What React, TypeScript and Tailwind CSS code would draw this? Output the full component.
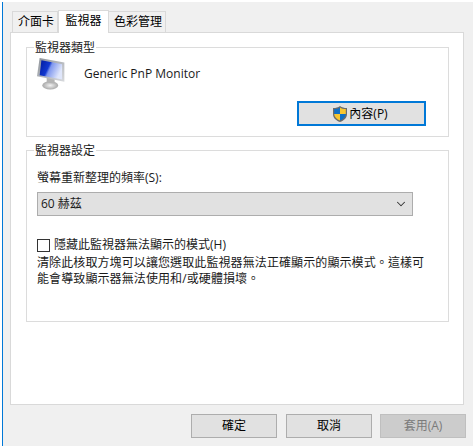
import { ChevronDown } from 'lucide-react'

const font = "font-['Open_Sans','Noto_Sans_CJK_TC',sans-serif]"

function MonitorIcon() {
  return (
    <svg width="30" height="33" viewBox="0 0 34 36" preserveAspectRatio="none" className="shrink-0">
      <defs>
        <linearGradient id="scr" x1="0" y1="0" x2="1" y2="0.4">
          <stop offset="0" stopColor="#001a9c" />
          <stop offset="0.45" stopColor="#1238d0" />
          <stop offset="0.55" stopColor="#7f97ee" />
          <stop offset="1" stopColor="#dfe6fb" />
        </linearGradient>
        <linearGradient id="bez" x1="0" y1="0" x2="1" y2="1">
          <stop offset="0" stopColor="#8d9299" />
          <stop offset="1" stopColor="#d8dadd" />
        </linearGradient>
        <radialGradient id="stand">
          <stop offset="0" stopColor="#f2f2f2" />
          <stop offset="1" stopColor="#a9a9a9" />
        </radialGradient>
      </defs>
      <ellipse cx="15" cy="31" rx="9" ry="4.5" fill="url(#stand)" />
      <path d="M11 22l9 2v5l-9-1z" fill="#b4b4b4" />
      <path d="M3 1l28 5v21L0 21z" fill="url(#bez)" />
      <path d="M5 3.500l23.500 4.500v16.500L3 20z" fill="url(#scr)" />
    </svg>
  )
}

function ShieldIcon() {
  return (
    <svg width="14" height="16" viewBox="0 0 14 16" className="shrink-0">
      <path d="M7 0c2 1.500 4 2 7 2v6c0 4-3 6.500-7 8-4-1.500-7-4-7-8V2c3 0 5-.5 7-2z" fill="#6b6b6b" />
      <path d="M7 1.500V8H1.200V3C3.500 3 5.500 2.500 7 1.500z" fill="#0f6fc6" />
      <path d="M7 1.500c1.500 1 3.500 1.500 5.800 1.500v5H7z" fill="#f8c630" />
      <path d="M1.200 8H7v6.500C3.800 13.200 1.500 11.200 1.200 8z" fill="#f8c630" />
      <path d="M7 8h5.800c-.3 3.200-2.600 5.200-5.800 6.500z" fill="#0f6fc6" />
    </svg>
  )
}

function Legend({ children }: { children: string }) {
  return (
    <span className="absolute left-[7px] top-[-8px] bg-white px-px leading-[16px] text-[#1a1a1a]">
      {children}
    </span>
  )
}

function FooterButton({ children, disabled = false }: { children: string; disabled?: boolean }) {
  return (
    <button
      className={
        disabled
          ? 'ml-[-1px] h-[24px] w-[86px] border border-[#bfbfbf] bg-[#cccccc] text-[#7a7a7a]'
          : 'h-[24px] w-[86px] border border-[#adadad] bg-[#e1e1e1] text-black'
      }
    >
      {children}
    </button>
  )
}

export default function App() {
  return (
    <div className={`${font} h-[446px] w-[473px] overflow-hidden bg-white pl-[2px] pt-[2px] text-[12px]`}>
      <div className="flex h-[444px] flex-col border-l border-[#0078d7] bg-[#f0f0f0] pl-[7px] pr-[7px] pt-[8px]">
        {/* Tabs */}
        <div className="relative z-10 flex h-[23px] items-end pl-[2px]">
          <div className="mb-px flex h-[21px] w-[46px] items-center justify-center border border-b-0 border-[#d9d9d9] bg-[#f0f0f0] pl-[2px]">
            介面卡
          </div>
          <div className="flex h-[23px] w-[51px] items-center justify-center border border-b-0 border-[#d9d9d9] bg-white pb-[2px]">
            監視器
          </div>
          <div className="mb-px flex h-[21px] w-[57px] items-center justify-center border border-b-0 border-l-0 border-[#d9d9d9] bg-[#f0f0f0] pl-[2px]">
            色彩管理
          </div>
        </div>

        {/* Panel */}
        <div className="-mt-px h-[373px] w-[454px] border border-[#d9d9d9] bg-white px-[15px] pt-[14px]">
          <div className="relative h-[90px] w-[423px] border border-[#dcdcdc]">
            <Legend>監視器類型</Legend>
            <div className="flex items-center pl-[10px] pt-[9px]">
              <MonitorIcon />
              <span className="ml-[17px] text-[#1a1a1a]">Generic PnP Monitor</span>
            </div>
            <div className="mt-[11px] flex justify-end pr-[22px]">
              <button className="flex h-[25px] w-[129px] items-center justify-center gap-[2px] border-2 border-[#0078d7] bg-[#e1e1e1] pr-[2px] text-black">
                <ShieldIcon />
                內容(P)
              </button>
            </div>
          </div>

          <div className="relative mt-[13px] h-[172px] w-[423px] border border-[#dcdcdc] px-[10px] pt-[19px] text-[#1a1a1a]">
            <Legend>監視器設定</Legend>
            <div className="leading-[16px]">螢幕重新整理的頻率(S):</div>
            <div className="mt-[6px] flex h-[24px] w-[376px] items-center justify-between border border-[#adadad] bg-[#e1e1e1] pl-[3px] pr-[4px]">
              <span>60 赫茲</span>
              <ChevronDown size={14} strokeWidth={1.75} className="text-[#333333]" />
            </div>
            <div className="mt-[21px] flex items-center gap-[4px] leading-[16px]">
              <span className="h-[13px] w-[13px] border border-[#333333] bg-white" />
              隱藏此監視器無法顯示的模式(H)
            </div>
            <p className="mt-[2px] w-[392px] leading-[16px] tracking-[0.1px]">
              清除此核取方塊可以讓您選取此監視器無法正確顯示的顯示模式。這樣可能會導致顯示器無法使用和/或硬體損壞。
            </p>
          </div>
        </div>

        {/* Footer */}
        <div className="mt-[9px] flex justify-end gap-[9px]">
          <FooterButton>確定</FooterButton>
          <FooterButton>取消</FooterButton>
          <FooterButton disabled>套用(A)</FooterButton>
        </div>
      </div>
    </div>
  )
}
